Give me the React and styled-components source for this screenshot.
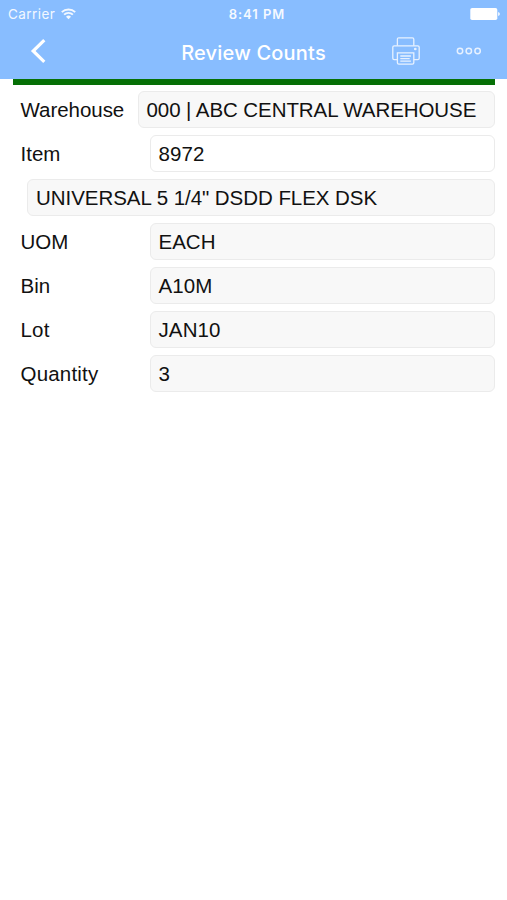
import React from 'react';
import styled, { createGlobalStyle } from "styled-components";

const GlobalStyle = createGlobalStyle`
  * {
    box-sizing: border-box;
  }

  body {
    margin: 0;
    background: #fff;
    font-family: "Liberation Sans", Arial, sans-serif;
    color: #111;
  }
`
const Screen = styled.main`
  width: 100%;
  min-height: 900px;
  background: #fff;
`
const Header = styled.header`
  height: 79px;
  background: #88bdff;
  color: #fff;
  font-family: Inter, sans-serif;
`
const StatusBar = styled.div`
  display: grid;
  grid-template-columns: 1fr auto 1fr;
  align-items: center;
  height: 27px;
  padding: 0 7px 0 8px;
  font-size: 13px;
  line-height: 28px;
`
const Carrier = styled.div`
  display: flex;
  align-items: center;
  gap: 6px;
  font-size: 13.5px;
  letter-spacing: 0.45px;
  opacity: 0.9;
`
const Clock = styled.time`
  padding-left: 6px;
  font-weight: 600;
  letter-spacing: 0.95px;
  opacity: 0.92;
`
const Battery = styled.svg`
  display: block;
  justify-self: end;
`
const NavBar = styled.div`
  display: grid;
  grid-template-columns: 1fr auto 1fr;
  align-items: center;
  height: 48px;
`
const IconButton = styled.button`
  display: flex;
  padding: 0;
  border: none;
  background: none;
  color: inherit;
  cursor: pointer;
`
const BackButton = styled(IconButton)`
  padding-left: 30px;
`
const Title = styled.h1`
  margin: 3px 0 0;
  font-size: 20px;
  font-weight: 500;
  line-height: 24px;
  letter-spacing: 0.2px;
`
const Actions = styled.div`
  display: flex;
  justify-content: flex-end;
  align-items: center;
  gap: 36px;
  padding-right: 25px;
`
const Content = styled.section`
  padding: 0 12px 0 13px;
`
const Divider = styled.hr`
  height: 6px;
  margin: 0 0 6px;
  border: none;
  background: #067006;
`
const Row = styled.div`
  display: flex;
  align-items: center;
  height: 37px;
  margin-bottom: 7px;
  padding-left: ${({ $indent }) => $indent || 7.5}px;
`
const Label = styled.label`
  flex: none;
  width: ${({ $width }) => $width || 129}px;
  font-size: 20.5px;
  line-height: 38px;
  letter-spacing: ${({ $spacing }) => $spacing || 0}px;
`
const Value = styled.output`
  flex: 1;
  height: 37px;
  padding: 0 8px;
  border: 1px solid #ebebeb;
  border-radius: 6px;
  background: ${({ $editable }) => $editable ? '#fff' : '#f8f8f8'};
  font-size: 20.5px;
  line-height: 36px;
  letter-spacing: ${({ $spacing }) => $spacing || 0}px;
  white-space: nowrap;
`

const WifiIcon = () => (
  <svg width="15" height="12" viewBox="0 0 15 12" fill="none" stroke="currentColor" strokeWidth="1.9">
    <path d="M0.8 4.2a9.5 9.5 0 0 1 13.4 0" />
    <path d="M3.1 6.7a6.2 6.2 0 0 1 8.8 0" />
    <path d="M7.5 11.3L5 8.8a3.5 3.5 0 0 1 5 0z" fill="currentColor" stroke="none" />
  </svg>
)

const BackIcon = () => (
  <svg width="16" height="24" viewBox="0 0 16 24" fill="none" stroke="currentColor" strokeWidth="3.2">
    <path d="M14.3 1.2L3.2 12l11.1 10.8" />
  </svg>
)

const PrinterIcon = () => (
  <svg width="28" height="28" viewBox="0 0 28 28" fill="none" stroke="currentColor" strokeWidth="1.3" opacity="0.8">
    <path d="M5.4 8.8V2.2Q5.4 0.8 6.8 0.8h13.6q1.4 0 1.4 1.4v6.6" />
    <path d="M5.4 22.6H2.2q-1.4 0-1.4-1.4V10.2q0-1.4 1.4-1.4h23.6q1.4 0 1.4 1.4v11q0 1.4-1.4 1.4h-4" />
    <path d="M5.4 15.8h16.4v10q0 1.4-1.4 1.4H6.8q-1.4 0-1.4-1.4z" />
    <path d="M8.3 19h10.6M8.3 21.6h9.4M8.3 24.2h10.6" />
    <circle cx="23.3" cy="12" r="0.7" fill="currentColor" />
  </svg>
)

const MoreIcon = () => (
  <svg width="26" height="8" viewBox="0 0 26 8" fill="none" stroke="currentColor" strokeWidth="1.5" opacity="0.8">
    <circle cx="4" cy="4" r="2.7" />
    <circle cx="12.8" cy="4" r="2.7" />
    <circle cx="21.6" cy="4" r="2.7" />
  </svg>
)

const fields = [
  { label: 'Warehouse', value: '000 | ABC CENTRAL WAREHOUSE', width: 117, labelSpacing: -0.04, spacing: -0.08 },
  { label: 'Item', value: '8972', editable: true, spacing: 0.1 },
  { value: 'UNIVERSAL 5 1/4" DSDD FLEX DSK', indent: 14, spacing: -0.05 },
  { label: 'UOM', value: 'EACH' },
  { label: 'Bin', value: 'A10M', spacing: 0.1 },
  { label: 'Lot', value: 'JAN10', labelSpacing: 0.2, spacing: 0.12 },
  { label: 'Quantity', value: '3', labelSpacing: 0.2 },
]

const App = () => {
  return (
    <Screen>
      <GlobalStyle />
      <Header>
        <StatusBar>
          <Carrier>Carrier <WifiIcon /></Carrier>
          <Clock>8:41 PM</Clock>
          <Battery width="30" height="12" viewBox="0 0 30 12" fill="#fff">
            <rect x="0.3" y="0" width="27" height="12" rx="1.8" />
            <path d="M28.2 4q1.6 0.5 1.6 2t-1.6 2z" />
          </Battery>
        </StatusBar>
        <NavBar>
          <BackButton aria-label="Back"><BackIcon /></BackButton>
          <Title>Review Counts</Title>
          <Actions>
            <IconButton aria-label="Print"><PrinterIcon /></IconButton>
            <IconButton aria-label="More"><MoreIcon /></IconButton>
          </Actions>
        </NavBar>
      </Header>
      <Content>
        <Divider />
        {fields.map(({ label, value, width, editable, indent, labelSpacing, spacing }) =>
          <Row key={value} $indent={indent}>
            {label && <Label $width={width} $spacing={labelSpacing}>{label}</Label>}
            <Value $editable={editable} $spacing={spacing}>{value}</Value>
          </Row>
        )}
      </Content>
    </Screen>
  )
}

export default App;
